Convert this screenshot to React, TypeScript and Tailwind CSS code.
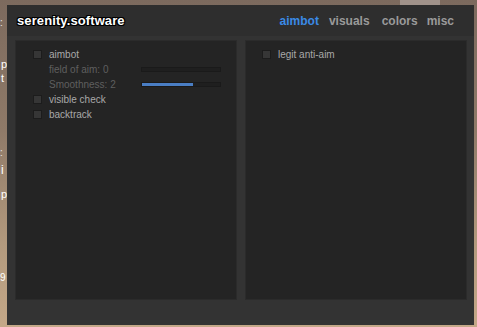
import React from 'react';

const font = { fontFamily: '"Liberation Sans", Arial, sans-serif' };

function Checkbox() {
  return <span className="block w-[9px] h-[9px] bg-[#363636] border border-[#1c1c1c] shrink-0" />;
}

function CheckRow({ label }: { label: string }) {
  return (
    <div className="flex items-center h-[15px] gap-[7px]">
      <Checkbox />
      <span className="text-[10px] text-[#a9a9a9] leading-none">{label}</span>
    </div>
  );
}

function SliderRow({ label, fill }: { label: string; fill: number }) {
  return (
    <div className="flex items-center h-[15px] pl-[16px]">
      <span className="w-[92px] text-[10px] text-[#5f5f5f] leading-none">{label}</span>
      <div className="w-[80px] h-[5px] bg-[#1f1f1f] border border-[#1a1a1a]">
        <div className="h-full bg-[#4a7ec4]" style={{ width: `${fill}%` }} />
      </div>
    </div>
  );
}

export default function App() {
  return (
    <div
      className="relative w-[477px] h-[327px] overflow-hidden bg-[linear-gradient(180deg,#7c6a5e_0%,#8f7a68_40%,#b39a7e_75%,#c4a888_100%)]"
      style={font}
    >
      {/* background game text peeking out */}
      <div className="absolute left-0 top-[18px] text-[10px] text-[#e8e8e8] leading-none">:</div>
      <div className="absolute left-[1px] top-[59px] text-[11px] text-white leading-none">p</div>
      <div className="absolute left-[1px] top-[73px] text-[11px] text-white leading-none">t</div>
      <div className="absolute left-0 top-[148px] text-[10px] text-[#e8e8e8] leading-none">:</div>
      <div className="absolute left-[1px] top-[164px] text-[12px] text-white leading-none">i</div>
      <div className="absolute left-[1px] top-[189px] text-[11px] text-white leading-none">p</div>
      <div className="absolute left-0 top-[273px] text-[10px] text-white leading-none">9</div>
      <div className="absolute left-[400px] top-0 w-[40px] h-[5px] bg-[#a0928a]" />

      <div className="absolute left-[7px] top-[5px] w-[467px] h-[320px] bg-[#333333] flex flex-col">
        <div className="h-[31px] bg-[#2e2e2e] flex items-center justify-between pl-[10px] pr-[20px]">
          <span
            className="text-[13px] font-bold text-white tracking-[0.1px]"
            style={{ textShadow: '1px 0 #000, -1px 0 #000, 0 1px #000, 0 -1px #000, 1px 1px #000, -1px -1px #000, 1px -1px #000, -1px 1px #000' }}
          >
            serenity.software
          </span>
          <div className="flex items-center text-[12px] font-bold">
            <span className="text-[#3a8ae6]">aimbot</span>
            <span className="text-[#9a9a9a] ml-[10px]">visuals</span>
            <span className="text-[#9a9a9a] ml-[12px]">colors</span>
            <span className="text-[#9a9a9a] ml-[9px]">misc</span>
          </div>
        </div>
        <div className="flex gap-[8px] pl-[8px] pt-[4px]">
          <div className="w-[222px] h-[260px] bg-[#242424] border border-[#2b2b2b] pl-[17px] pt-[6px]">
            <CheckRow label="aimbot" />
            <SliderRow label="field of aim: 0" fill={0} />
            <SliderRow label="Smoothness: 2" fill={66} />
            <CheckRow label="visible check" />
            <CheckRow label="backtrack" />
          </div>
          <div className="w-[222px] h-[260px] bg-[#242424] border border-[#2b2b2b] pl-[16px] pt-[6px]">
            <CheckRow label="legit anti-aim" />
          </div>
        </div>
      </div>
    </div>
  );
}
